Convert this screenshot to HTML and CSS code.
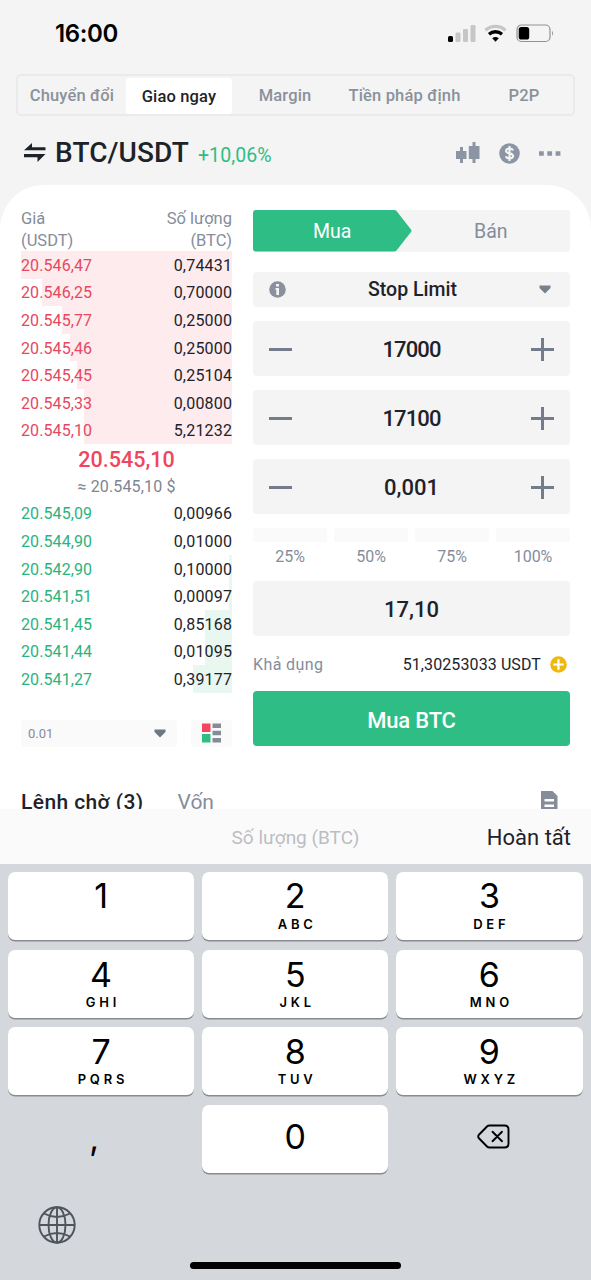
FILE: index.html
```html
<!DOCTYPE html>
<html lang="vi">
<head>
<meta charset="utf-8">
<title>BTC/USDT</title>
<link rel="stylesheet" href="styles.css">
</head>
<body>
<div class="phone">
  <header class="status">
    <span class="clock">16:00</span>
    <svg class="status-icons" width="108" height="22" viewBox="0 0 108 22">
      <rect x="0" y="12" width="5" height="6" rx="1.5" fill="#000"/>
      <g fill="#c6c6c7"><rect x="7.5" y="8.500" width="5" height="9.500" rx="1.300"/><rect x="15" y="5" width="5" height="13" rx="1.300"/><rect x="22.500" y="1" width="5" height="17" rx="1.300"/></g>
      <path d="M37.500 6.200A15 15 0 0 1 57.500 6.200" fill="none" stroke="#c6c6c7" stroke-width="3.400"/>
      <path d="M41 10.200A9.800 9.800 0 0 1 54 10.200" fill="none" stroke="#000" stroke-width="3.300"/>
      <path d="M44.200 14.200Q47.500 11.600 50.800 14.200L47.500 17.800Z" fill="#000"/>
      <rect x="69" y="1" width="33" height="16.500" rx="4.500" fill="none" stroke="#929294" stroke-width="1.200"/>
      <rect x="70.700" y="3" width="10.500" height="12.600" rx="2.600" fill="#000"/>
      <path d="M104 6.800Q106 9.300 104 11.800Z" fill="#929294"/>
    </svg>
  </header>

  <nav class="modes">
    <span class="mode">Chuyển đổi</span>
    <span class="mode mode-on">Giao ngay</span>
    <span class="mode">Margin</span>
    <span class="mode">Tiền pháp định</span>
    <span class="mode">P2P</span>
  </nav>

  <section class="pair">
    <svg class="swap" width="22" height="20" viewBox="0 0 22 20" fill="#1f222b"><path d="M0 7.200L8 0V4.200H21.500V7.200ZM21.500 11L13.500 19V14.300H0V11Z"/></svg>
    <h1 class="pair-name">BTC/USDT</h1>
    <span class="change">+10,06%</span>
    <div class="tools">
      <svg width="24" height="22" viewBox="0 0 24 22" fill="#8c95a3"><path d="M4 5H7V9H10.500V17H7V21H4V17H0V9H4ZM16.500 0H19.500V4H23.500V17H19.500V21H16.500V17H12.800V4H16.500Z"/></svg>
      <svg width="21" height="21" viewBox="0 0 21 21"><circle cx="10.500" cy="10.500" r="10.300" fill="#8c95a3"/><path d="M14 7.500C13.500 6 12.200 5.600 10.500 5.600C8.300 5.600 7 6.400 7 8C7 11.200 14.100 9.500 14.100 13C14.100 14.600 12.700 15.400 10.500 15.400C8.600 15.400 7.300 14.800 6.900 13.200M10.500 3V18" fill="none" stroke="#f4f4f4" stroke-width="2.100"/></svg>
      <svg width="22" height="21" viewBox="0 0 22 21" fill="#8c95a3"><path d="M0 8.200H4.800V12.800H0ZM8.300 8.200H13.100V12.800H8.300ZM16.600 8.200H21.400V12.800H16.600Z"/></svg>
    </div>
  </section>

  <main class="card">
    <section class="book">
      <div class="book-head"><div>Giá<br>(USDT)</div><div class="right">Số lượng<br>(BTC)</div></div>
      <div class="rows asks">
        <div class="row"><i class="depth" style="width:100%"></i><span>20.546,47</span><b>0,74431</b></div>
        <div class="row"><i class="depth" style="width:90%"></i><span>20.546,25</span><b>0,70000</b></div>
        <div class="row"><i class="depth" style="width:80.500%"></i><span>20.545,77</span><b>0,25000</b></div>
        <div class="row"><i class="depth" style="width:77%"></i><span>20.545,46</span><b>0,25000</b></div>
        <div class="row"><i class="depth" style="width:73.700%"></i><span>20.545,45</span><b>0,25104</b></div>
        <div class="row"><i class="depth" style="width:70.200%"></i><span>20.545,33</span><b>0,00800</b></div>
        <div class="row"><i class="depth" style="width:70%"></i><span>20.545,10</span><b>5,21232</b></div>
      </div>
      <div class="last">20.545,10</div>
      <div class="approx">≈ 20.545,10 $</div>
      <div class="rows bids">
        <div class="row"><span>20.545,09</span><b>0,00966</b></div>
        <div class="row"><span>20.544,90</span><b>0,01000</b></div>
        <div class="row"><i class="depth" style="width:1.500%"></i><span>20.542,90</span><b>0,10000</b></div>
        <div class="row"><i class="depth" style="width:1.500%"></i><span>20.541,51</span><b>0,00097</b></div>
        <div class="row"><i class="depth" style="width:13%"></i><span>20.541,45</span><b>0,85168</b></div>
        <div class="row"><i class="depth" style="width:13%"></i><span>20.541,44</span><b>0,01095</b></div>
        <div class="row"><i class="depth" style="width:18.500%"></i><span>20.541,27</span><b>0,39177</b></div>
      </div>
      <div class="book-foot">
        <div class="step"><span>0.01</span><svg width="12" height="9" viewBox="0 0 12 9" fill="#6f7784"><path d="M.5.5H11.500V3L6 8.500L.5 3Z"/></svg></div>
        <div class="view"><svg width="20" height="20" viewBox="0 0 20 20"><path d="M0 .5H8.500V9H0Z" fill="#f6465d"/><path d="M0 11H8.500V19.500H0Z" fill="#2ebd85"/><path d="M10.500.5H19V5H10.500ZM10.500 7.800H19V12.300H10.500ZM10.500 15H19V19.500H10.500Z" fill="#858c98"/></svg></div>
      </div>
    </section>

    <section class="form">
      <div class="sides">
        <svg class="side-shape" width="160" height="42" viewBox="0 0 160 42"><path d="M3 0H141Q142.500 0 143.500 1L158 19.500Q159 20.800 158 22L143.500 40.500Q142.500 41.500 141 41.500H3Q0 41.500 0 38.500V3Q0 0 3 0Z" fill="#2ebd85"/></svg>
        <span class="side side-buy">Mua</span><span class="side">Bán</span>
      </div>
      <div class="kind">
        <svg width="17" height="17" viewBox="0 0 17 17"><circle cx="8.500" cy="8.500" r="8.300" fill="#8a919e"/><path d="M7 3H10V5.500H7ZM6.500 7H10V14H7.300V8.800H6.500Z" fill="#f4f4f4"/></svg>
        <span>Stop Limit</span>
        <svg width="12" height="9" viewBox="0 0 12 9" fill="#78808d"><path d="M.5.5H11.500V3L6 8.500L.5 3Z"/></svg>
      </div>
      <div class="field"><i class="minus"></i><span class="whole">17000</span><i class="plus"></i></div>
      <div class="field"><i class="minus"></i><span class="whole">17100</span><i class="plus"></i></div>
      <div class="field"><i class="minus"></i><span>0,001</span><i class="plus"></i></div>
      <div class="parts">
        <div class="part"><i></i>25%</div><div class="part"><i></i>50%</div><div class="part"><i></i>75%</div><div class="part"><i></i>100%</div>
      </div>
      <div class="field total"><span>17,10</span></div>
      <div class="avail"><span class="avail-label">Khả dụng</span><span class="avail-sum">51,30253033 USDT</span>
        <svg width="17" height="17" viewBox="0 0 17 17"><circle cx="8.500" cy="8.500" r="8.300" fill="#edb90f"/><path d="M8.500 3.300V13.700M3.300 8.500H13.700" stroke="#fff" stroke-width="2.200"/></svg>
      </div>
      <button class="buy">Mua BTC</button>
    </section>
  </main>

  <section class="orders">
    <span class="orders-on">Lệnh chờ (3)</span><span class="orders-off">Vốn</span>
    <svg class="doc" width="17" height="20" viewBox="0 0 17 20"><path d="M0 0H11.500L16.500 5V20H0Z" fill="#858d99"/><path d="M3.500 8H13V10.500H3.500ZM3.500 13.500H13V16H3.500Z" fill="#fff"/></svg>
  </section>

  <section class="accessory"><span></span><span class="hint">Số lượng (BTC)</span><span class="done">Hoàn tất</span></section>

  <section class="keyboard">
    <div class="keys">
      <div class="key first"><b>1</b><small></small></div><div class="key first"><b>2</b><small>ABC</small></div><div class="key first"><b>3</b><small>DEF</small></div>
      <div class="key"><b>4</b><small>GHI</small></div><div class="key"><b>5</b><small>JKL</small></div><div class="key"><b>6</b><small>MNO</small></div>
      <div class="key"><b>7</b><small>PQRS</small></div><div class="key"><b>8</b><small>TUV</small></div><div class="key"><b>9</b><small>WXYZ</small></div>
      <div class="key plain comma">,</div>
      <div class="key zero"><b>0</b></div>
      <div class="key plain"><svg class="erase" width="33" height="26" viewBox="0 0 33 26" fill="none" stroke="#000" stroke-width="1.900" stroke-linejoin="round" stroke-linecap="round"><path d="M12.500 1.500H27.500Q31.500 1.500 31.500 5.500V19.500Q31.500 23.500 27.500 23.500H12.500Q11 23.500 10 22.500L1.700 14Q.700 12.500 1.700 11L10 2.500Q11 1.500 12.500 1.500ZM15.500 7.800L25 17.200M25 7.800L15.500 17.200"/></svg></div>
    </div>
    <svg class="globe" width="38" height="38" viewBox="0 0 38 38" fill="none" stroke="#50545d" stroke-width="1.900"><circle cx="19" cy="19" r="17.700"/><ellipse cx="19" cy="19" rx="8.500" ry="17.700"/><path d="M19 1.300V36.700M1.300 19H36.700M6 7.500Q19 14.500 32 7.500M6 30.500Q19 23.500 32 30.500"/></svg>
    <div class="home"></div>
  </section>
</div>
</body>
</html>
```
FILE: styles.css
```css
* { box-sizing: border-box; }
body { margin: 0; font-family: Roboto, "Noto Sans", sans-serif; background: #f4f4f4; color: #1e2329; }
svg { display: block; flex: none; }
.phone { width: 591px; height: 1280px; overflow: hidden; display: flex; flex-direction: column; }

.status { height: 74px; flex: none; padding: 20px 35px 0 55px; display: flex; justify-content: space-between; }
.clock { font: 600 24px/28px Inter, sans-serif; letter-spacing: -0.4px; color: #000; }
.status-icons { margin-top: 4px; }

.modes { height: 42px; flex: none; margin: 0 16px; border: 2px solid #eaeaeb; border-radius: 5px; display: grid; grid-template-columns: 108px 106px 106px 133px 1fr; align-items: center; }
.mode { font-weight: 500; font-size: 16.500px; line-height: 38px; padding-top: 1px; letter-spacing: 0.150px; color: #8a919c; text-align: center; white-space: nowrap; }
.mode:last-child { padding-left: 4px; }
.mode-on { background: #fff; color: #1e2329; height: 36px; line-height: 36px; border-radius: 3px; }

.pair { height: 69px; flex: none; display: flex; align-items: center; padding: 5px 30px 0 24px; }
.pair-name { margin: 0 0 0 9px; font-weight: 500; font-size: 28px; letter-spacing: 0.1px; line-height: 34px; }
.change { margin: 5px 0 0 9px; font-size: 19.500px; letter-spacing: 0.1px; color: #2ebd85; }
.tools { margin-left: auto; display: flex; align-items: center; gap: 19px; }

.card { height: 589px; flex: none; background: #fff; border-radius: 44px 44px 0 0; padding: 25px 21px 0; display: flex; justify-content: space-between; }
.book { width: 211px; margin-top: -3px; }
.book-head { display: flex; justify-content: space-between; font-size: 16.500px; line-height: 22px; color: #858d9a; height: 44px; padding-top: 1px; }
.right { text-align: right; }
.row { position: relative; height: 27.600px; display: flex; justify-content: space-between; align-items: center; font-size: 16px; letter-spacing: 0.1px; padding-top: 1px; }
.row span, .row b { position: relative; font-weight: 400; }
.row b { letter-spacing: 0.200px; margin-right: -0.2px; }
.depth { position: absolute; right: 0; top: 0; bottom: 0; }
.asks .depth { background: #fdebee; }
.asks span { color: #e5485f; }
.bids .depth { background: #e9f7f1; }
.bids span { color: #2bb37e; }
.last { text-align: center; font-weight: 500; font-size: 21.500px; line-height: 32px; height: 30px; color: #f0455c; }
.approx { text-align: center; font-size: 16px; letter-spacing: 0.150px; line-height: 26px; height: 25.500px; color: #7d8592; }
.book-foot { display: flex; justify-content: space-between; margin-top: 27px; height: 27px; }
.step { width: 156px; background: #fafafa; border-radius: 3px; padding: 0 11px 0 7px; display: flex; justify-content: space-between; align-items: center; font-size: 13px; color: #858d9a; }
.view { width: 41px; background: #fafafa; border-radius: 3px; display: grid; place-items: center; }

.form { width: 317px; }
.sides { position: relative; height: 42px; background: #f4f4f4; border-radius: 3px; display: grid; grid-template-columns: 1fr 1fr; margin-bottom: 20px; }
.side-shape { position: absolute; left: 0; top: 0; }
.side { position: relative; text-align: center; font-size: 19.500px; line-height: 43px; color: #858d9a; }
.side-buy { color: #fff; }
.kind { height: 35px; background: #f4f4f4; border-radius: 4px; padding: 0 19px 0 16px; display: flex; justify-content: space-between; align-items: center; font-weight: 500; font-size: 19.500px; margin-bottom: 14px; }
.field { height: 55px; background: #f4f4f4; border-radius: 4px; padding: 1px 16px 0; display: flex; justify-content: space-between; align-items: center; font-weight: 500; font-size: 22px; margin-bottom: 14px; }
.whole { letter-spacing: -0.9px; }
.minus, .plus { width: 23px; height: 23px; background: linear-gradient(#747b8b, #747b8b) center / 23px 3px no-repeat; }
.plus { background: linear-gradient(#747b8b, #747b8b) center / 23px 3px no-repeat, linear-gradient(#747b8b, #747b8b) center / 3px 23px no-repeat; }
.parts { display: grid; grid-template-columns: repeat(4, 1fr); gap: 7px; height: 53px; }
.part { text-align: center; font-size: 16px; line-height: 29px; color: #858d9a; }
.part i { display: block; height: 14px; background: #fafafa; border-radius: 2px; }
.total { justify-content: center; margin-bottom: 0; }
.avail { height: 55px; display: flex; align-items: center; font-size: 16px; letter-spacing: 0.1px; padding: 2px 3px 0 0; }
.avail-label { color: #858d9a; letter-spacing: 0.400px; }
.avail-sum { margin: 0 9px 0 auto; }
.buy { display: block; width: 100%; height: 55px; border: 0; border-radius: 4px; background: #2ebd85; color: #fff; font: 500 22px Roboto, sans-serif; letter-spacing: -0.2px; padding: 3px 0 0; }

.orders { height: 35px; flex: none; background: #fff; overflow: hidden; padding: 14px 33px 0 21px; display: flex; font-size: 21px; line-height: 28px; }
.orders-on { font-weight: 500; letter-spacing: 0.400px; }
.orders-off { margin-left: 34px; color: #858d9a; }
.doc { margin: 3px 0 0 auto; }

.accessory { height: 55px; flex: none; background: #fafafa; padding: 2px 20px 0; display: grid; grid-template-columns: 1fr auto 1fr; align-items: center; }
.hint { font-size: 19px; color: #bcbec2; }
.done { font-size: 22px; text-align: right; }

.keyboard { height: 416px; flex: none; background: #d4d7dc; padding: 8px 8.500px 0 8px; }
.keys { display: grid; grid-template-columns: repeat(3, 1fr); gap: 9.500px 8px; color: #000; }
.key { height: 68px; background: #fff; border-radius: 7px; box-shadow: 0 1.500px 0 #898b8f; display: flex; flex-direction: column; align-items: center; font-family: Inter, sans-serif; padding-top: 5px; }
.key b { font-weight: 400; font-size: 34px; line-height: 40px; height: 40px; }
.first b { margin-top: -1px; margin-bottom: 1px; }
.key small { font-weight: 600; font-size: 13px; line-height: 14px; letter-spacing: 3.800px; margin-right: -3.800px; }
.plain { background: none; box-shadow: none; }
.comma { font-size: 34px; line-height: 56px; padding-right: 14px; }
.zero { padding-top: 12px; }
.erase { margin: 14px 0 0 8px; }
.globe { margin: 33px 0 0 30px; }
.home { width: 211px; height: 7px; border-radius: 4px; background: #000; margin: 18px auto 0; }
```
